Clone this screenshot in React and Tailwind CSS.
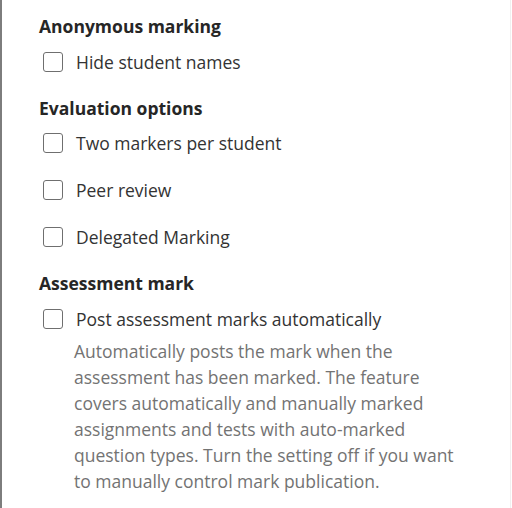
import React from "react";

function Check({ label }) {
  return (
    <label className="flex items-center h-[24px] gap-[13px]">
      <span className="ml-[4px] w-[20px] h-[20px] rounded-[3px] border-[1.5px] border-[#6f6f6f] bg-white shrink-0" />
      <span className="text-[17.5px] text-[#333333] leading-[24px]">{label}</span>
    </label>
  );
}

function Heading({ children }) {
  return (
    <h3 className="text-[17.5px] font-bold text-[#262626] leading-[24px]">
      {children}
    </h3>
  );
}

export default function App() {
  return (
    <div
      className="relative w-[512px] h-[508px] bg-white border-l-2 border-[#7d7d7d] overflow-hidden"
      style={{ fontFamily: '"Open Sans", sans-serif' }}
    >
      <div className="absolute left-[-2px] top-[43px] w-[2px] h-[10px] bg-[#1a1a1a]" />
      <div className="absolute right-[1px] top-0 w-px h-full bg-[#f0f0f0]" />
      <div className="pl-[37px] pt-[14px]">
        <Heading>Anonymous marking</Heading>
        <div className="mt-[12px]">
          <Check label="Hide student names" />
        </div>
        <div className="mt-[22px]">
          <Heading>Evaluation options</Heading>
        </div>
        <div className="mt-[11px] flex flex-col gap-[23px]">
          <Check label="Two markers per student" />
          <Check label="Peer review" />
          <Check label="Delegated Marking" />
        </div>
        <div className="mt-[22px]">
          <Heading>Assessment mark</Heading>
        </div>
        <div className="mt-[12px]">
          <Check label="Post assessment marks automatically" />
        </div>
        <p className="mt-[7px] ml-[35px] whitespace-nowrap text-[17.5px] leading-[26px] text-[#737373]">
          Automatically posts the mark when the
          <br />
          assessment has been marked. The feature
          <br />
          covers automatically and manually marked
          <br />
          assignments and tests with auto-marked
          <br />
          question types. Turn the setting off if you want
          <br />
          to manually control mark publication.
        </p>
      </div>
    </div>
  );
}
